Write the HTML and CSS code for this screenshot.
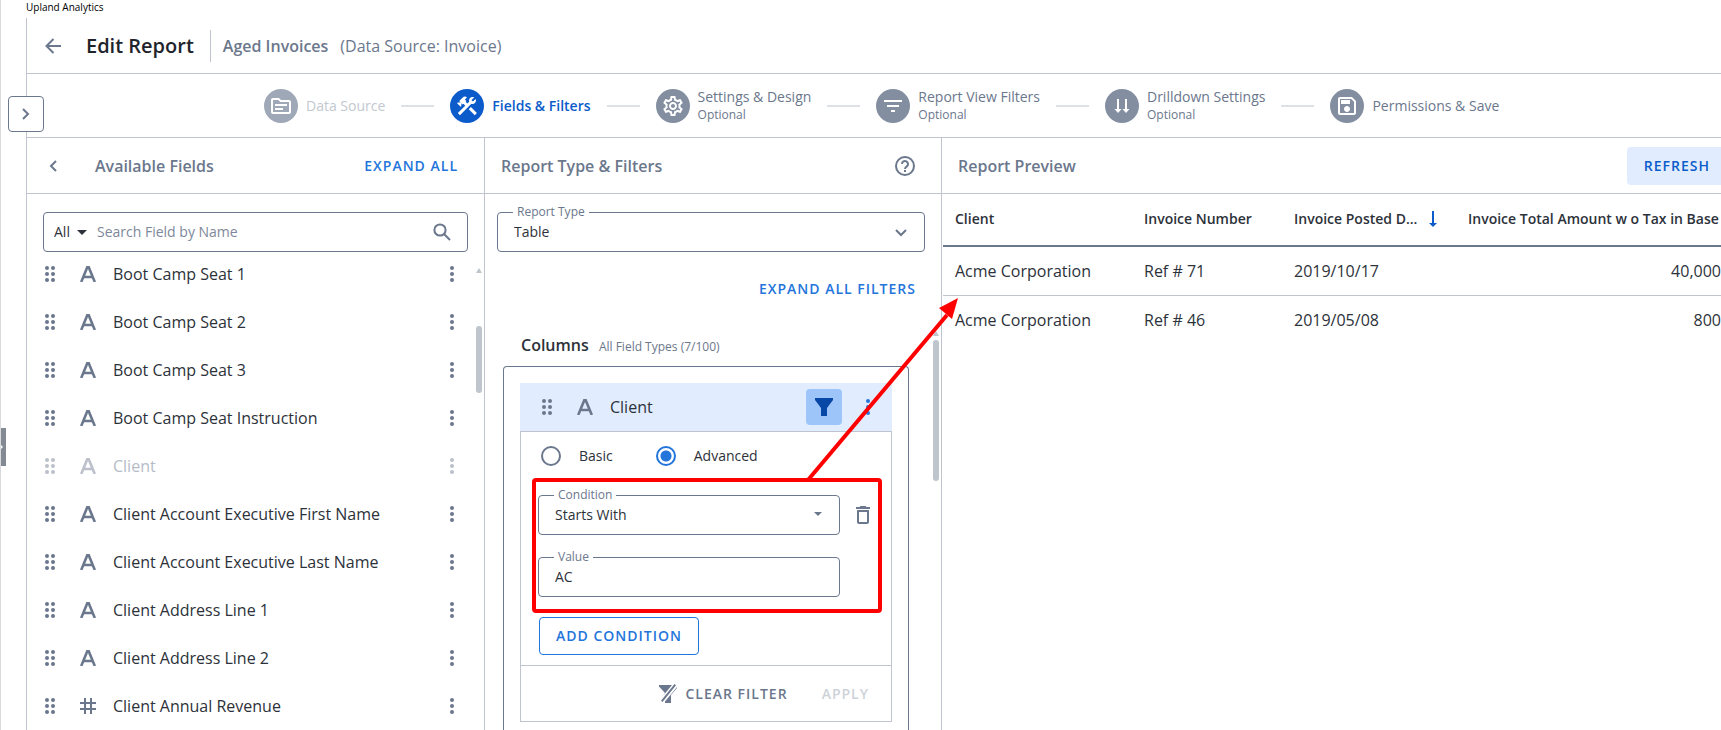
FILE: index.html
```html
<!DOCTYPE html>
<html lang="en">
<head>
	<meta charset="UTF-8">
	<meta name="viewport" content="width=device-width, initial-scale=1.0">
	<title>Upland Analytics</title>
	<link rel="stylesheet" href="styles.css">
</head>
<body>
	<!-- shared icons -->
	<svg class="sprite" aria-hidden="true">
		<symbol id="drag" viewBox="0 0 10 16">
			<circle cx="2" cy="2" r="2"/><circle cx="8" cy="2" r="2"/>
			<circle cx="2" cy="8" r="2"/><circle cx="8" cy="8" r="2"/>
			<circle cx="2" cy="14" r="2"/><circle cx="8" cy="14" r="2"/>
		</symbol>
		<symbol id="dots" viewBox="0 0 4 16">
			<circle cx="2" cy="2" r="2"/><circle cx="2" cy="8" r="2"/><circle cx="2" cy="14" r="2"/>
		</symbol>
		<symbol id="type-text" viewBox="0 0 16 16">
			<path d="M1.200 16L7.300 1.200h1.400L14.800 16M3.600 11h8.800" fill="none" stroke="currentColor" stroke-width="2.600"/>
		</symbol>
		<symbol id="type-number" viewBox="0 0 16 16">
			<path d="M5 0v16M11 0v16M0 5h16M0 11h16" fill="none" stroke="currentColor" stroke-width="2"/>
		</symbol>
		<symbol id="down" viewBox="0 0 10 5"><path d="M0 0h10L5 5z"/></symbol>
		<symbol id="arrow-down" viewBox="0 0 8 16"><path d="M3 0h2v12h3l-4 4-4-4h3z"/></symbol>
	</svg>

	<div class="app-name">Upland Analytics</div>

	<div class="app">
		<header class="header">
			<button class="icon-btn back" aria-label="Back">
				<svg width="16" height="16" viewBox="0 0 16 16"><path d="M16 8H1.500M8.500 1L1.500 8l7 7" fill="none" stroke="currentColor" stroke-width="2"/></svg>
			</button>
			<h1>Edit Report</h1>
			<h2>Aged Invoices</h2>
			<span class="source">(Data Source: Invoice)</span>
		</header>

		<nav class="steps">
			<a href="#" class="step done">
				<span class="circle"><svg width="24" height="24" viewBox="0 0 24 24"><path d="M20 6h-8l-2-2H4c-1.100 0-2 .9-2 2v12c0 1.100.9 2 2 2h16c1.100 0 2-.9 2-2V8c0-1.100-.9-2-2-2zm0 12H4V6h5.200l2 2H20v10zM18 12H6v-2h12v2zm-4 4H6v-2h8v2z"/></svg></span>
				<span class="label">Data Source</span>
			</a>
			<a href="#" class="step active">
				<span class="circle"><svg width="24" height="24" viewBox="0 0 24 24"><path d="M13.783 15.172l2.121-2.121 5.996 5.996-2.121 2.121zM17.500 10c1.930 0 3.500-1.570 3.500-3.500 0-.58-.16-1.120-.41-1.600l-2.700 2.700-1.490-1.490 2.700-2.700c-.48-.25-1.020-.41-1.600-.41C15.570 3 14 4.570 14 6.500c0 .41.08.8.21 1.160l-1.850 1.850-1.780-1.780.71-.71-1.410-1.410L12 3.490c-1.170-1.170-3.070-1.170-4.240 0L4.220 7.030l1.410 1.410H2.810l-.71.71 3.540 3.540.71-.71V9.150l1.410 1.410.71-.71 1.780 1.780-7.410 7.410 2.120 2.120L16.340 9.790c.36.13.75.21 1.160.21z"/></svg></span>
				<span class="label">Fields &amp; Filters</span>
			</a>
			<a href="#" class="step">
				<span class="circle"><svg width="24" height="24" viewBox="0 0 24 24"><path d="M19.430 12.980c.04-.32.07-.64.07-.98s-.03-.66-.07-.98l2.110-1.650c.19-.15.24-.42.12-.64l-2-3.460c-.12-.22-.39-.3-.61-.22l-2.490 1c-.52-.4-1.080-.73-1.690-.98l-.38-2.650C14.460 2.180 14.250 2 14 2h-4c-.25 0-.46.18-.49.42l-.38 2.650c-.61.25-1.170.59-1.690.98l-2.490-1c-.23-.09-.49 0-.61.22l-2 3.460c-.13.22-.07.49.12.64l2.110 1.650c-.04.32-.07.65-.07.98s.03.66.07.98l-2.110 1.650c-.19.15-.24.42-.12.64l2 3.460c.12.22.39.3.61.22l2.490-1c.52.4 1.080.73 1.690.98l.38 2.650c.03.24.24.42.49.42h4c.25 0 .46-.18.49-.42l.38-2.650c.61-.25 1.170-.59 1.690-.98l2.490 1c.23.09.49 0 .61-.22l2-3.460c.12-.22.07-.49-.12-.64l-2.110-1.650zm-1.980-1.710c.04.31.05.52.05.73s-.02.43-.05.73l-.14 1.130.89.7 1.080.84-.7 1.210-1.270-.51-1.040-.42-.9.68c-.43.32-.84.56-1.250.73l-1.060.43-.16 1.130-.2 1.350h-1.400l-.19-1.350-.16-1.130-1.060-.43c-.43-.18-.83-.41-1.230-.71l-.91-.7-1.060.43-1.270.51-.7-1.210 1.080-.84.89-.7-.14-1.130c-.03-.31-.05-.54-.05-.74s.02-.43.05-.73l.14-1.130-.89-.7-1.080-.84.7-1.210 1.270.51 1.040.42.9-.68c.43-.32.84-.56 1.250-.73l1.060-.43.16-1.130.2-1.350h1.390l.19 1.350.16 1.130 1.060.43c.43.18.83.41 1.230.71l.91.7 1.060-.43 1.270-.51.7 1.210-1.070.85-.89.7.14 1.130zM12 8c-2.210 0-4 1.790-4 4s1.790 4 4 4 4-1.790 4-4-1.790-4-4-4zm0 6c-1.100 0-2-.9-2-2s.9-2 2-2 2 .9 2 2-.9 2-2 2z"/></svg></span>
				<span class="label">Settings &amp; Design<small>Optional</small></span>
			</a>
			<a href="#" class="step">
				<span class="circle"><svg width="24" height="24" viewBox="0 0 24 24"><path d="M10 18h4v-2h-4v2zM3 6v2h18V6H3zm3 7h12v-2H6v2z"/></svg></span>
				<span class="label">Report View Filters<small>Optional</small></span>
			</a>
			<a href="#" class="step">
				<span class="circle"><svg width="24" height="24" viewBox="0 0 24 24"><path d="M7 5h2v10h2.500L8 19l-3.500-4H7zM15 5h2v10h2.500L16 19l-3.500-4H15z"/></svg></span>
				<span class="label">Drilldown Settings<small>Optional</small></span>
			</a>
			<a href="#" class="step">
				<span class="circle"><svg width="24" height="24" viewBox="0 0 24 24"><path d="M17 3H5c-1.110 0-2 .9-2 2v14c0 1.100.89 2 2 2h14c1.100 0 2-.9 2-2V7l-4-4zm2 16H5V5h11.170L19 7.830V19zm-7-7c-1.660 0-3 1.340-3 3s1.340 3 3 3 3-1.340 3-3-1.340-3-3-3zM6 6h9v4H6z"/></svg></span>
				<span class="label">Permissions &amp; Save</span>
			</a>
		</nav>

		<main class="panels">
			<section class="panel fields">
				<div class="panel-head">
					<button class="icon-btn collapse" aria-label="Collapse">
						<svg width="8" height="12" viewBox="0 0 8 12"><path d="M7 1L2 6l5 5" fill="none" stroke="currentColor" stroke-width="2"/></svg>
					</button>
					<h3>Available Fields</h3>
					<button class="text-btn">EXPAND ALL</button>
				</div>
				<div class="search">
					<select aria-label="Field group"><option>All</option></select>
					<svg class="caret" width="10" height="5"><use href="#down"/></svg>
					<input type="text" placeholder="Search Field by Name" aria-label="Search Field by Name">
					<button class="icon-btn" aria-label="Search">
						<svg class="line" width="18" height="18" viewBox="0 0 18 18"><circle cx="7" cy="7" r="5.600"/><path d="M11 11l6 6"/></svg>
					</button>
				</div>
				<div class="field-scroll">
					<ul class="field-list">
						<li><svg class="drag"><use href="#drag"/></svg><svg class="type"><use href="#type-text"/></svg><span>Boot Camp Seat 1</span><button class="icon-btn" aria-label="More"><svg class="dots"><use href="#dots"/></svg></button></li>
						<li><svg class="drag"><use href="#drag"/></svg><svg class="type"><use href="#type-text"/></svg><span>Boot Camp Seat 2</span><button class="icon-btn" aria-label="More"><svg class="dots"><use href="#dots"/></svg></button></li>
						<li><svg class="drag"><use href="#drag"/></svg><svg class="type"><use href="#type-text"/></svg><span>Boot Camp Seat 3</span><button class="icon-btn" aria-label="More"><svg class="dots"><use href="#dots"/></svg></button></li>
						<li><svg class="drag"><use href="#drag"/></svg><svg class="type"><use href="#type-text"/></svg><span>Boot Camp Seat Instruction</span><button class="icon-btn" aria-label="More"><svg class="dots"><use href="#dots"/></svg></button></li>
						<li class="used"><svg class="drag"><use href="#drag"/></svg><svg class="type"><use href="#type-text"/></svg><span>Client</span><button class="icon-btn" aria-label="More"><svg class="dots"><use href="#dots"/></svg></button></li>
						<li><svg class="drag"><use href="#drag"/></svg><svg class="type"><use href="#type-text"/></svg><span>Client Account Executive First Name</span><button class="icon-btn" aria-label="More"><svg class="dots"><use href="#dots"/></svg></button></li>
						<li><svg class="drag"><use href="#drag"/></svg><svg class="type"><use href="#type-text"/></svg><span>Client Account Executive Last Name</span><button class="icon-btn" aria-label="More"><svg class="dots"><use href="#dots"/></svg></button></li>
						<li><svg class="drag"><use href="#drag"/></svg><svg class="type"><use href="#type-text"/></svg><span>Client Address Line 1</span><button class="icon-btn" aria-label="More"><svg class="dots"><use href="#dots"/></svg></button></li>
						<li><svg class="drag"><use href="#drag"/></svg><svg class="type"><use href="#type-text"/></svg><span>Client Address Line 2</span><button class="icon-btn" aria-label="More"><svg class="dots"><use href="#dots"/></svg></button></li>
						<li><svg class="drag"><use href="#drag"/></svg><svg class="type"><use href="#type-number"/></svg><span>Client Annual Revenue</span><button class="icon-btn" aria-label="More"><svg class="dots"><use href="#dots"/></svg></button></li>
					</ul>
					<div class="scrollbar"><i class="up"></i><i class="thumb"></i></div>
				</div>
			</section>

			<section class="panel filters">
				<div class="panel-head">
					<h3>Report Type &amp; Filters</h3>
					<button class="icon-btn" aria-label="Help">
						<svg class="line" width="20" height="20" viewBox="0 0 20 20"><circle cx="10" cy="10" r="9"/><path d="M7 8a3 3 0 1 1 4.800 2.400C10.700 11.200 10 11.700 10 13M10 14v2"/></svg>
					</button>
				</div>
				<div class="report-type">
					<div class="box">
						<label for="type">Report Type</label>
						<select id="type"><option>Table</option></select>
						<svg class="mark" width="12" height="8" viewBox="0 0 12 8"><path d="M1 1l5 5 5-5" fill="none" stroke="currentColor" stroke-width="2"/></svg>
					</div>
					<button class="text-btn">EXPAND ALL FILTERS</button>
				</div>
				<div class="columns-scroll">
					<div class="columns-area">
						<h4>Columns <small>All Field Types (7/100)</small></h4>
						<div class="columns-box">
							<div class="card">
								<div class="card-head">
									<svg class="drag"><use href="#drag"/></svg>
									<svg class="type"><use href="#type-text"/></svg>
									<span>Client</span>
									<button class="funnel" aria-label="Filter">
										<svg width="18" height="18" viewBox="0 0 18 18"><path d="M0 0h18v2l-6 8v8H6v-8L0 2z"/></svg>
									</button>
									<button class="icon-btn more" aria-label="More"><svg class="dots"><use href="#dots"/></svg></button>
								</div>
								<div class="mode">
									<label><input type="radio" name="mode">Basic</label>
									<label><input type="radio" name="mode" checked>Advanced</label>
								</div>
								<div class="condition">
									<div class="box">
										<label for="condition">Condition</label>
										<select id="condition"><option>Starts With</option></select>
										<svg class="mark" width="8" height="4"><use href="#down"/></svg>
									</div>
									<button class="icon-btn" aria-label="Delete">
										<svg width="14" height="18" viewBox="0 0 14 18"><path d="M1 16c0 1.100.9 2 2 2h8c1.100 0 2-.9 2-2V4H1v12zM3 6h8v10H3V6zM10.500 1l-1-1h-5l-1 1H0v2h14V1z"/></svg>
									</button>
									<div class="box">
										<label for="value">Value</label>
										<input id="value" type="text" value="AC">
									</div>
									<div class="highlight"></div>
								</div>
								<button class="outline-btn">ADD CONDITION</button>
								<div class="card-foot">
									<button class="text-btn grey">
										<svg width="18" height="19" viewBox="0 0 18 19"><path d="M0 1h13L3.500 12.500 6 9 0 2.500zM15.500 0L17 1.200 3.500 18 2 16.800zM18 3v1l-6 7v8H6v-1.500z"/></svg>
										CLEAR FILTER
									</button>
									<button class="text-btn" disabled>APPLY</button>
								</div>
							</div>
						</div>
					</div>
					<div class="scrollbar"><i class="up"></i><i class="thumb"></i></div>
				</div>
			</section>

			<section class="panel preview">
				<div class="panel-head">
					<h3>Report Preview</h3>
					<button class="refresh">REFRESH</button>
				</div>
				<table>
					<thead>
						<tr>
							<th class="client">Client</th>
							<th class="number">Invoice Number</th>
							<th class="posted"><span>Invoice Posted D...<svg width="8" height="16"><use href="#arrow-down"/></svg></span></th>
							<th>Invoice Total Amount w o Tax in Base</th>
						</tr>
					</thead>
					<tbody>
						<tr><td>Acme Corporation</td><td>Ref # 71</td><td>2019/10/17</td><td>40,000</td></tr>
						<tr><td>Acme Corporation</td><td>Ref # 46</td><td>2019/05/08</td><td>800</td></tr>
					</tbody>
				</table>
			</section>
		</main>
	</div>

	<!-- things that float over the page -->
	<button class="open-menu" aria-label="Open menu">
		<svg width="8" height="12" viewBox="0 0 8 12"><path d="M1 1l5 5-5 5" fill="none" stroke="currentColor" stroke-width="2"/></svg>
	</button>
	<div class="side-handle"><svg width="4" height="6" viewBox="0 0 4 6"><path d="M0 0l3 3-3 3z"/></svg></div>
	<svg class="pointer" width="160" height="190" viewBox="0 0 160 190">
		<path d="M8 182L147 17" stroke="#f00" stroke-width="4"/>
		<path d="M158 0l-19 10 13 11z" fill="#f00"/>
	</svg>
</body>
</html>
```

FILE: styles.css
```css
* {
	box-sizing: border-box;
}

body {
	margin: 0;
	height: 100vh;
	overflow: hidden;
	display: flex;
	flex-direction: column;
	position: relative;
	border-left: 1px solid #d9dbde;
	background: #fff;
	color: #2d323a;
	font-family: "Open Sans", "Noto Sans", sans-serif;
	font-size: 14px;
	line-height: 20px;
}

h1, h2, h3, h4, ul {
	margin: 0;
	padding: 0;
	font-weight: 600;
}

svg {
	display: block;
	flex: none;
	fill: currentColor;
}

.line {
	fill: none;
	stroke: currentColor;
	stroke-width: 2;
}

button, input, select {
	font: inherit;
	color: inherit;
	background: none;
	border: none;
	padding: 0;
	margin: 0;
}

button {
	cursor: pointer;
}

select {
	appearance: none;
}

.sprite {
	position: absolute;
	width: 0;
	height: 0;
}

.app-name {
	height: 18px;
	padding-left: 25px;
	font-size: 10px;
	line-height: 14px;
	color: #000;
}

.app {
	flex: 1;
	min-height: 0;
	display: flex;
	flex-direction: column;
	margin-left: 25px;
	border-left: 1px solid #bfc4ce;
}

.icon-btn {
	display: flex;
	color: #6b778c;
}

.text-btn, .refresh, .outline-btn {
	font-weight: 600;
	letter-spacing: 1px;
	color: #2475db;
	white-space: nowrap;
}

/* header */
.header {
	display: flex;
	align-items: center;
	height: 56px;
	padding-left: 18px;
	border-bottom: 1px solid #bfc4ce;
	font-size: 16px;
	color: #6b778c;
}

.header h1 {
	margin-left: 25px;
	padding-right: 16px;
	border-right: 1px solid #bfc4ce;
	font-size: 20px;
	line-height: 32px;
	color: #1f242b;
}

.header h2 {
	margin: 0 12px;
	font-size: 16px;
}

/* steps */
.steps {
	display: flex;
	align-items: center;
	height: 64px;
	padding-left: 237px;
	border-bottom: 1px solid #bfc4ce;
	white-space: nowrap;
}

.step {
	display: flex;
	align-items: center;
	gap: 8px;
	color: #6b778c;
	text-decoration: none;
}

.step + .step::before {
	content: "";
	width: 33px;
	height: 2px;
	margin: 0 8px 0 16px;
	background: #dde1e6;
}

.circle {
	display: flex;
	align-items: center;
	justify-content: center;
	width: 34px;
	height: 34px;
	border-radius: 50%;
	background: #838ea0;
	color: #fff;
}

.label {
	line-height: 18px;
}

.label small {
	display: block;
	font-size: 12px;
}

.done {
	color: #c2c8d0;
}

.done .circle {
	background: #9fa8b6;
}

.active {
	color: #0b5cca;
	font-weight: 600;
}

.active .circle {
	background: #0b5cca;
}

/* panels */
.panels {
	flex: 1;
	min-height: 0;
	display: grid;
	grid-template-columns: 458px 457px 1fr;
}

.panel {
	display: flex;
	flex-direction: column;
	min-width: 0;
	min-height: 0;
	overflow: hidden;
	border-right: 1px solid #bfc4ce;
}

.panel-head {
	flex: none;
	display: flex;
	align-items: center;
	justify-content: space-between;
	height: 56px;
	padding: 0 26px 0 16px;
	border-bottom: 1px solid #bfc4ce;
	color: #6b778c;
}

.panel-head h3 {
	font-size: 16px;
}

.fields .panel-head {
	justify-content: flex-start;
	padding-left: 22px;
}

.fields h3 {
	flex: 1;
	margin-left: 38px;
}

/* available fields */
.search {
	display: flex;
	align-items: center;
	height: 40px;
	margin: 18px 16px 0;
	padding: 0 16px 0 10px;
	border: 1px solid #6b778c;
	border-radius: 4px;
}

.search select {
	width: 23px;
}

.search input {
	flex: 1;
	margin-left: 10px;
	outline: none;
}

.search input::placeholder {
	color: #7d889a;
	opacity: 1;
}

.field-scroll {
	flex: 1;
	min-height: 0;
	display: flex;
	justify-content: space-between;
	overflow: hidden;
}

.field-list {
	flex: 1;
	margin-top: -2px;
	list-style: none;
	font-size: 16px;
	font-weight: 400;
}

.field-list li {
	display: flex;
	align-items: center;
	height: 48px;
	padding-left: 18px;
}

.field-list span {
	flex: 1;
}

.field-list .drag, .field-list .dots {
	color: #6b778c;
}

.drag {
	width: 10px;
	height: 16px;
	margin-right: 25px;
}

.type {
	width: 16px;
	height: 16px;
	margin-right: 17px;
	color: #6b778c;
}

.dots {
	width: 4px;
	height: 16px;
}

.field-list .used {
	color: #b5bcc8;
}

.used svg {
	opacity: 0.45;
}

/* scrollbars */
.scrollbar {
	flex: none;
	width: 6px;
	margin: 16px 2px 0 22px;
}

.scrollbar i {
	display: block;
	background: #bfc5cd;
}

.scrollbar .up {
	height: 5px;
	clip-path: polygon(50% 0, 100% 100%, 0 100%);
}

.scrollbar .thumb {
	height: 67px;
	margin-top: 53px;
	border-radius: 3px;
}

/* report type and filters */
.box {
	position: relative;
	display: flex;
	height: 40px;
	border: 1px solid #6b778c;
	border-radius: 4px;
}

.box label {
	position: absolute;
	top: -9px;
	left: 15px;
	padding: 0 4px;
	background: #fff;
	font-size: 12px;
	line-height: 16px;
	color: #6b778c;
}

.box select, .box input {
	flex: 1;
	width: 100%;
	padding: 0 16px;
	outline: none;
}

.mark {
	position: absolute;
	top: 16px;
	right: 17px;
	color: #6b778c;
	pointer-events: none;
}

.report-type {
	display: flex;
	flex-direction: column;
	align-items: flex-end;
	gap: 27px;
	padding: 18px 16px 0 12px;
}

.report-type .box {
	align-self: stretch;
}

.report-type .text-btn {
	margin-right: 9px;
}

.columns-scroll {
	flex: 1;
	min-height: 0;
	display: flex;
	padding-top: 16px;
}

.columns-area {
	flex: 1;
	display: flex;
	flex-direction: column;
	padding: 20px 0 0 18px;
}

h4 {
	padding-left: 18px;
	font-size: 16px;
}

h4 small {
	margin-left: 6px;
	font-size: 12px;
	font-weight: 400;
	color: #6b778c;
}

.columns-box {
	flex: 1;
	margin-top: 9px;
	padding: 16px 16px 0;
	border: 1px solid #6b778c;
	border-bottom: none;
	border-radius: 4px 4px 0 0;
}

.columns-scroll .scrollbar {
	margin-left: 24px;
}

.columns-scroll .thumb {
	height: 141px;
	margin-top: 4px;
}

.card {
	border: 1px solid #bfc4ce;
	border-top: none;
}

.card-head {
	display: flex;
	align-items: center;
	height: 49px;
	margin: 0 -1px;
	padding: 0 22px;
	border-bottom: 1px solid #bfc4ce;
	background: #e1edff;
	font-size: 16px;
}

.card-head .drag {
	color: #6b778c;
}

.card-head span {
	flex: 1;
}

.funnel {
	display: flex;
	align-items: center;
	justify-content: center;
	width: 36px;
	height: 36px;
	margin-right: 24px;
	border-radius: 4px;
	background: #9dc5fa;
	color: #0747a6;
}

.card-head .more {
	color: #2475db;
}

.mode {
	display: flex;
	gap: 43px;
	padding: 14px 20px;
}

.mode label {
	display: flex;
	align-items: center;
	gap: 18px;
}

.mode input {
	appearance: none;
	width: 20px;
	height: 20px;
	border: 2px solid #6b778c;
	border-radius: 50%;
}

.mode input:checked {
	border-color: #2475db;
	background: radial-gradient(circle, #2475db 5px, transparent 6px);
}

.condition {
	position: relative;
	display: grid;
	grid-template-columns: 302px auto;
	justify-content: start;
	align-items: center;
	gap: 22px 16px;
	padding: 15px 0 20px 17px;
}

/* red frame round the condition */
.highlight {
	position: absolute;
	top: -2px;
	left: 11px;
	right: 9px;
	bottom: 4px;
	border: 4px solid #f00;
	border-radius: 4px;
	pointer-events: none;
}

.outline-btn {
	height: 38px;
	margin: 0 0 10px 18px;
	padding: 0 16px;
	border: 1px solid #2475db;
	border-radius: 4px;
}

.card-foot {
	display: flex;
	align-items: center;
	justify-content: flex-end;
	gap: 34px;
	height: 56px;
	padding-right: 22px;
	border-top: 1px solid #bfc4ce;
}

.grey {
	display: flex;
	align-items: center;
	gap: 8px;
	color: #6b778c;
}

.text-btn:disabled {
	color: #cdd2d9;
}

/* preview */
.preview {
	border-right: none;
}

.preview .panel-head {
	padding-right: 0;
}

.refresh {
	height: 38px;
	padding: 0 11px 0 17px;
	border-radius: 4px 0 0 4px;
	background: #e1edff;
	color: #0b5cca;
}

table {
	margin-left: 1px;
	border-collapse: collapse;
	table-layout: fixed;
	white-space: nowrap;
}

th, td {
	height: 49px;
	padding: 0 0 0 12px;
	text-align: left;
}

th {
	height: 52px;
	padding-bottom: 1px;
	font-weight: 600;
	border-bottom: 2px solid #6b778c;
}

td {
	font-size: 16px;
	border-bottom: 1px solid #bfc4ce;
}

tr:last-child td {
	border-bottom: none;
}

td:last-child {
	text-align: right;
}

.client {
	width: 189px;
}

.number {
	width: 150px;
}

.posted {
	width: 174px;
}

.posted span {
	display: flex;
	align-items: center;
	gap: 12px;
}

.posted svg {
	color: #0b5cca;
}

/* floating parts */
.open-menu {
	position: absolute;
	top: 96px;
	left: 7px;
	display: flex;
	align-items: center;
	justify-content: center;
	width: 36px;
	height: 36px;
	border: 1px solid #6b778c;
	border-radius: 4px;
	background: #fff;
	color: #6b778c;
}

.side-handle {
	position: absolute;
	top: 428px;
	left: -1px;
	display: flex;
	align-items: center;
	width: 6px;
	height: 38px;
	background: #838a94;
	color: #fff;
}

.pointer {
	position: absolute;
	top: 298px;
	left: 799px;
	pointer-events: none;
}
```
